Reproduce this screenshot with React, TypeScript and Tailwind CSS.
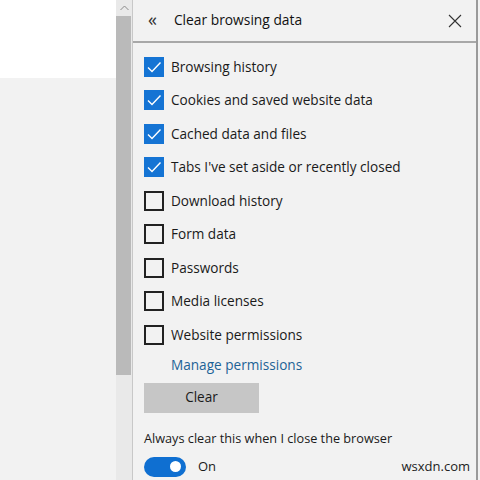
import React from 'react';

const items: { label: string; checked: boolean }[] = [
  { label: 'Browsing history', checked: true },
  { label: 'Cookies and saved website data', checked: true },
  { label: 'Cached data and files', checked: true },
  { label: "Tabs I've set aside or recently closed", checked: true },
  { label: 'Download history', checked: false },
  { label: 'Form data', checked: false },
  { label: 'Passwords', checked: false },
  { label: 'Media licenses', checked: false },
  { label: 'Website permissions', checked: false },
];

const Checkbox = ({ checked }: { checked: boolean }) =>
  checked ? (
    <div className="w-[20px] h-[20px] bg-[#1574d4] flex items-center justify-center shrink-0">
      <svg width="16" height="16" viewBox="0 0 16 16" fill="none">
        <path d="M2 8.5 L6 12.5 L14.5 3.5" stroke="#fff" strokeWidth="1.4" />
      </svg>
    </div>
  ) : (
    <div className="w-[20px] h-[20px] border-2 border-[#222] shrink-0" />
  );

export default function App() {
  return (
    <div
      className="w-[480px] h-[480px] flex overflow-hidden bg-[#f2f2f2] text-[#1a1a1a]"
      style={{ fontFamily: '"Open Sans", "Noto Sans", sans-serif' }}
    >
      {/* page behind the hub */}
      <div className="w-[116px] flex flex-col">
        <div className="h-[78px] bg-white" />
        <div className="flex-1 bg-[#f2f2f2]" />
      </div>

      {/* scrollbar */}
      <div className="w-[16px] flex flex-col bg-[#e9e9e9]">
        <div className="h-[16px] flex items-center justify-center">
          <svg width="9" height="6" viewBox="0 0 9 6" fill="none">
            <path d="M0.5 5 L4.5 1 L8.5 5" stroke="#8a8a8a" strokeWidth="1" />
          </svg>
        </div>
        <div className="h-[359px] w-[15px] bg-[#bababa]" />
      </div>

      {/* panel */}
      <div className="flex-1 border-l border-[#c8c8c8] border-r-2 border-r-[#9a9a9a] mr-[2px] flex flex-col">
        <div className="h-[43px] border-b-2 border-[#a8a8a8] flex items-center pl-[15px] pr-[14px]">
          <span className="text-[18px] leading-none text-[#333] mt-[-3px]">«</span>
          <span className="ml-[17px] text-[13.8px] text-[#111]">Clear browsing data</span>
          <svg className="ml-auto" width="14" height="14" viewBox="0 0 14 14" fill="none">
            <path d="M1 1 L13 13 M13 1 L1 13" stroke="#333" strokeWidth="1.1" />
          </svg>
        </div>

        <div className="pl-[11px] pt-[7px] flex flex-col">
          {items.map((it) => (
            <div key={it.label} className="h-[33.5px] flex items-center gap-[7px]">
              <Checkbox checked={it.checked} />
              <span className="text-[13.6px]">{it.label}</span>
            </div>
          ))}
          <div className="h-[27px] flex items-center pl-[27px]">
            <span className="text-[13.6px] text-[#1d6296]">Manage permissions</span>
          </div>
          <div className="mt-[4px] w-[115px] h-[30px] bg-[#c6c6c6] flex items-center justify-center text-[13.6px]">
            Clear
          </div>
          <div className="mt-[16px] text-[12.7px] leading-[18px]">Always clear this when I close the browser</div>
          <div className="mt-[10px] flex items-center">
            <div className="w-[42px] h-[20px] rounded-full bg-[#0f6fd1] flex items-center justify-end pr-[5px]">
              <div className="w-[11px] h-[11px] rounded-full bg-white" />
            </div>
            <span className="ml-[12px] text-[13px]">On</span>
            <span className="ml-auto mr-[6px] text-[13px] text-[#222]">wsxdn.com</span>
          </div>
        </div>
      </div>
    </div>
  );
}
